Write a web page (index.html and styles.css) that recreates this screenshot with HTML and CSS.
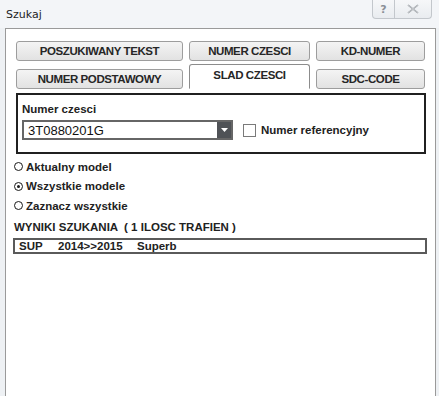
FILE: index.html
```html
<!DOCTYPE html>
<html lang="pl">
<head>
<meta charset="utf-8">
<title>Szukaj</title>
<link rel="stylesheet" href="styles.css">
</head>
<body>
<div class="window">
  <div class="titlebar">
    <span class="title">Szukaj</span>
    <div class="caption-buttons">
      <span class="cap-btn help">?</span>
      <span class="cap-btn close">
        <svg width="12" height="10" viewBox="0 0 12 10"><path d="M1 1 L11 9 M11 1 L1 9" stroke="#8a8f96" stroke-width="1.6" fill="none"/><path d="M1 1 L11 9 M11 1 L1 9" stroke="#ffffff" stroke-width="0.5" fill="none"/></svg>
      </span>
    </div>
  </div>
  <div class="client">
    <div class="tabs">
      <div class="tab-row">
        <div class="tab w1">POSZUKIWANY TEKST</div>
        <div class="tab w2">NUMER CZESCI</div>
        <div class="tab w3">KD-NUMER</div>
      </div>
      <div class="tab-row row2">
        <div class="tab w1">NUMER PODSTAWOWY</div>
        <div class="tab w2 active">SLAD CZESCI</div>
        <div class="tab w3">SDC-CODE</div>
      </div>
    </div>
    <div class="groupbox">
      <div class="gb-label">Numer czesci</div>
      <div class="gb-row">
        <div class="combo">
          <span class="combo-text">3T0880201G</span>
          <span class="combo-btn"><svg width="7" height="4" viewBox="0 0 7 4"><path d="M0 0 H7 L3.5 4 Z" fill="#ffffff"/></svg></span>
        </div>
        <span class="checkbox"></span>
        <span class="cb-label">Numer referencyjny</span>
      </div>
    </div>
    <div class="radios">
      <div class="radio"><span class="ring"></span>Aktualny model</div>
      <div class="radio"><span class="ring on"></span>Wszystkie modele</div>
      <div class="radio"><span class="ring"></span>Zaznacz wszystkie</div>
    </div>
    <div class="results-title">WYNIKI SZUKANIA  ( 1 ILOSC TRAFIEN )</div>
    <div class="results">
      <span class="c1">SUP</span><span class="c2">2014&gt;&gt;2015</span><span class="c3">Superb</span>
    </div>
  </div>
</div>
</body>
</html>
```

FILE: styles.css
```css
html, body {
  margin: 0;
  padding: 0;
}
body {
  width: 439px;
  height: 396px;
  overflow: hidden;
  background: #eef1f4;
  font-family: "Liberation Sans", Arial, sans-serif;
  color: #1a1a1a;
}
.window {
  display: flex;
  flex-direction: column;
  height: 396px;
}
.titlebar {
  height: 28px;
  display: flex;
  align-items: flex-start;
  background: #f3f5f8;
  flex: none;
}
.title {
  font-family: "DejaVu Sans", "Noto Sans", sans-serif;
  font-size: 11px;
  color: #1e1e1e;
  margin: 8px 0 0 6px;
}
.caption-buttons {
  margin-left: auto;
  margin-right: 7px;
  display: flex;
  height: 18px;
  border: 1px solid #c3c7cc;
  border-top: none;
  border-radius: 0 0 4px 4px;
  background: linear-gradient(#f6f7f9, #e9ecf0);
}
.cap-btn {
  display: flex;
  align-items: center;
  justify-content: center;
  height: 18px;
}
.help {
  width: 21px;
  border-right: 1px solid #c3c7cc;
  font-family: "DejaVu Sans", sans-serif;
  font-weight: bold;
  font-size: 11px;
  color: #8a8f96;
}
.close {
  width: 36px;
}
.client {
  flex: 1;
  margin: 0 3px 0 5px;
  border: 1px solid #9a9a9a;
  border-bottom: none;
  background: #ffffff;
  padding: 12px 0 0 7px;
}
.tabs {
  margin-left: 3px;
  width: 409px;
}
.tab-row {
  display: flex;
  gap: 6px;
  align-items: flex-end;
}
.row2 {
  margin-top: 3px;
  height: 25px;
}
.tab {
  box-sizing: border-box;
  height: 20px;
  border: 1px solid #9d9d9d;
  border-radius: 3px;
  background: linear-gradient(#f4f4f4, #e2e2e2);
  display: flex;
  align-items: center;
  justify-content: center;
  font-weight: bold;
  font-size: 11.5px;
  letter-spacing: -0.4px;
  color: #262626;
}
.row2 .tab.active {
  height: 25px;
  background: #ffffff;
  border-color: #8c8c8c;
  border-bottom-color: #ffffff;
  border-radius: 3px 3px 0 0;
  padding-bottom: 4px;
}
.w1 { width: 167px; }
.w2 { width: 121px; }
.w3 { width: 109px; }
.groupbox {
  box-sizing: border-box;
  margin: 4px 0 0 3px;
  width: 410px;
  height: 61px;
  border: 2px solid #202020;
  padding: 8px 0 0 4px;
}
.gb-label {
  font-weight: bold;
  font-size: 11.5px;
  color: #222;
}
.gb-row {
  display: flex;
  align-items: center;
  margin-top: 5px;
}
.combo {
  box-sizing: border-box;
  width: 211px;
  height: 20px;
  border: 2px solid #666;
  display: flex;
  align-items: center;
  justify-content: space-between;
}
.combo-text {
  font-size: 13px;
  margin-left: 4px;
  color: #111;
}
.combo-btn {
  width: 14px;
  height: 16px;
  background: #4f5256;
  display: flex;
  align-items: center;
  justify-content: center;
}
.checkbox {
  box-sizing: border-box;
  width: 13px;
  height: 13px;
  border: 1.5px solid #7a7a7a;
  margin-left: 10px;
}
.cb-label {
  font-weight: bold;
  font-size: 11.5px;
  margin-left: 5px;
  color: #222;
}
.radios {
  margin: 3px 0 0 1px;
  display: flex;
  flex-direction: column;
}
.radio {
  height: 19.5px;
  display: flex;
  align-items: center;
  font-weight: bold;
  font-size: 11.5px;
  color: #222;
}
.ring {
  box-sizing: border-box;
  width: 9px;
  height: 9px;
  border: 1.8px solid #1a1a1a;
  border-radius: 50%;
  margin-right: 3px;
  display: flex;
  align-items: center;
  justify-content: center;
}
.ring.on::after {
  content: "";
  width: 3px;
  height: 3px;
  border-radius: 50%;
  background: #1a1a1a;
}
.results-title {
  white-space: pre;
  font-weight: bold;
  font-size: 11.5px;
  color: #222;
  margin: 5px 0 0 1px;
}
.results {
  box-sizing: border-box;
  width: 414px;
  height: 16px;
  margin-top: 5px;
  border: 2px solid #5a5a5a;
  display: flex;
  align-items: center;
  font-weight: bold;
  font-size: 11.5px;
  color: #222;
}
.c1 { margin-left: 4px; width: 39px; }
.c2 { width: 79px; }
```
